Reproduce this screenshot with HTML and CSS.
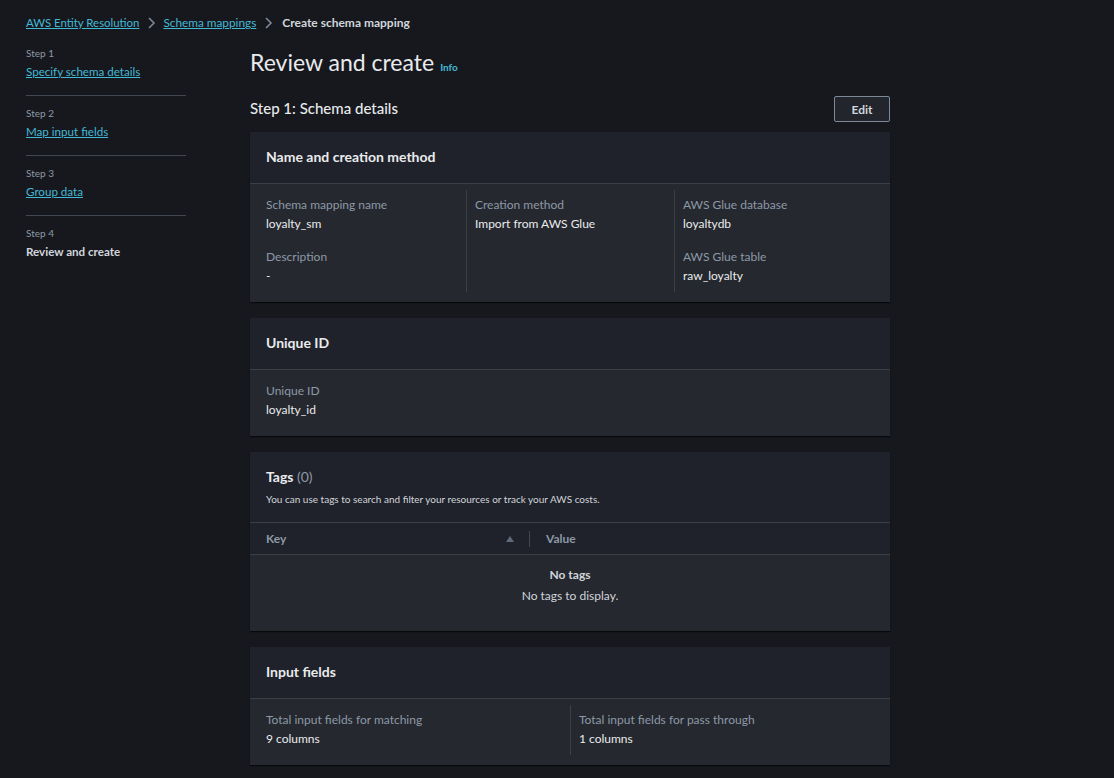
FILE: index.html
```html
<!DOCTYPE html>
<html lang="en">
<head>
<meta charset="utf-8">
<title>Create schema mapping</title>
<link rel="stylesheet" href="styles.css">
</head>
<body>
<div class="page">
  <nav class="breadcrumbs">
    <a href="#" class="crumb-link">AWS Entity Resolution</a>
    <svg class="chev" width="16" height="16" viewBox="0 0 16 16"><path d="M6 3l5 5-5 5" fill="none" stroke="#7d8998" stroke-width="1.6"/></svg>
    <a href="#" class="crumb-link">Schema mappings</a>
    <svg class="chev" width="16" height="16" viewBox="0 0 16 16"><path d="M6 3l5 5-5 5" fill="none" stroke="#7d8998" stroke-width="1.6"/></svg>
    <span class="crumb-current">Create schema mapping</span>
  </nav>
  <div class="layout">
    <aside class="steps">
      <div class="step">
        <div class="step-num">Step 1</div>
        <a href="#" class="step-link">Specify schema details</a>
      </div>
      <div class="step">
        <div class="step-num">Step 2</div>
        <a href="#" class="step-link">Map input fields</a>
      </div>
      <div class="step">
        <div class="step-num">Step 3</div>
        <a href="#" class="step-link">Group data</a>
      </div>
      <div class="step last">
        <div class="step-num">Step 4</div>
        <span class="step-active">Review and create</span>
      </div>
    </aside>
    <main class="main">
      <div class="page-title-row">
        <h1 class="page-title">Review and create</h1>
        <a href="#" class="info">Info</a>
      </div>
      <div class="section-head">
        <h2 class="section-title">Step 1: Schema details</h2>
        <button class="btn">Edit</button>
      </div>

      <section class="container">
        <div class="c-header"><h3 class="c-title">Name and creation method</h3></div>
        <div class="c-body">
          <div class="cols cols-3">
            <div class="col">
              <div class="kv">
                <div class="k">Schema mapping name</div>
                <div class="v">loyalty_sm</div>
              </div>
              <div class="kv">
                <div class="k">Description</div>
                <div class="v">-</div>
              </div>
            </div>
            <div class="col">
              <div class="kv">
                <div class="k">Creation method</div>
                <div class="v">Import from AWS Glue</div>
              </div>
            </div>
            <div class="col">
              <div class="kv">
                <div class="k">AWS Glue database</div>
                <div class="v">loyaltydb</div>
              </div>
              <div class="kv">
                <div class="k">AWS Glue table</div>
                <div class="v">raw_loyalty</div>
              </div>
            </div>
          </div>
        </div>
      </section>

      <section class="container">
        <div class="c-header"><h3 class="c-title">Unique ID</h3></div>
        <div class="c-body">
          <div class="cols cols-1">
            <div class="col">
              <div class="kv">
                <div class="k">Unique ID</div>
                <div class="v">loyalty_id</div>
              </div>
            </div>
          </div>
        </div>
      </section>

      <section class="container">
        <div class="c-header tags-header">
          <h3 class="c-title">Tags <span class="count">(0)</span></h3>
          <p class="c-desc">You can use tags to search and filter your resources or track your AWS costs.</p>
        </div>
        <div class="table">
          <div class="th-row">
            <div class="th th-key">
              <span>Key</span>
              <svg class="sort" width="10" height="8" viewBox="0 0 10 8"><path d="M5 1l4 6H1z" fill="#5f6b7a"/></svg>
            </div>
            <div class="th th-value">Value</div>
          </div>
          <div class="empty">
            <div class="empty-title">No tags</div>
            <div class="empty-text">No tags to display.</div>
          </div>
        </div>
      </section>

      <section class="container">
        <div class="c-header"><h3 class="c-title">Input fields</h3></div>
        <div class="c-body">
          <div class="cols cols-2">
            <div class="col">
              <div class="kv">
                <div class="k">Total input fields for matching</div>
                <div class="v">9 columns</div>
              </div>
            </div>
            <div class="col">
              <div class="kv">
                <div class="k">Total input fields for pass through</div>
                <div class="v">1 columns</div>
              </div>
            </div>
          </div>
        </div>
      </section>
    </main>
  </div>
</div>
</body>
</html>
```

FILE: styles.css
```css
* { box-sizing: border-box; }
html, body { margin: 0; padding: 0; }
body {
  background: #16181d;
  color: #d1d5db;
  font-family: "Lato", "Open Sans", sans-serif;
  font-size: 12px;
  line-height: 16px;
}
a { color: #44b9d6; text-decoration: underline; }
.page { padding: 15px 26px 0 26px; }

.breadcrumbs {
  display: flex;
  align-items: center;
  gap: 4px;
  height: 16px;
  font-size: 11.4px;
}
.chev { display: block; }
.crumb-link + .chev + .crumb-link { font-size: 11.8px; }
.crumb-current { color: #d1d5db; font-weight: 700; font-size: 12px; margin-left: 2px; }

.layout {
  display: flex;
  gap: 64px;
  margin-top: 14px;
}
.steps { width: 160px; flex: none; font-size: 11.6px; }
.step {
  padding: 0 0 15px;
  border-bottom: 1px solid #414750;
  margin-bottom: 9px;
}
.step.last { border-bottom: none; }
.step-num { color: #8d99a8; font-size: 10px; line-height: 16px; margin-bottom: 3px; }
.step-active { font-weight: 700; color: #d1d5db; }

.main { width: 640px; flex: none; }
.page-title-row { display: flex; align-items: baseline; gap: 6px; height: 34px; margin-top: 2px; }
.page-title {
  margin: 0;
  font-size: 23px;
  line-height: 30px;
  font-weight: 400;
  color: #e9ebed;
}
.info { font-size: 10px; font-weight: 700; text-decoration: none; }

.section-head {
  display: flex;
  justify-content: space-between;
  align-items: center;
  margin-top: 15px;
  margin-bottom: 10px;
}
.section-title { margin: 0 0 2px; font-size: 15px; line-height: 20px; font-weight: 500; color: #e9ebed; }
.btn {
  width: 56px;
  height: 26px;
  background: #22252b;
  border: 1px solid #7d8998;
  border-radius: 2px;
  color: #d1d5db;
  font-family: inherit;
  font-weight: 700;
  font-size: 12px;
  padding: 0;
}

.container {
  background: #25282e;
  box-shadow: 0 1px 1px rgba(0,0,0,0.6);
  margin-bottom: 16px;
}
.c-header {
  background: #1f222a;
  padding: 15px 16px 17px;
  border-bottom: 1px solid #3b4047;
}
.c-title {
  margin: 0;
  font-size: 14px;
  line-height: 19px;
  font-weight: 700;
  color: #e9ebed;
}
.tags-header { padding-top: 15px; padding-bottom: 15px; }
.count { font-weight: 400; color: #8d99a8; }
.c-desc { margin: 5px 0 0; font-size: 10px; line-height: 16px; color: #d1d5db; }

.c-body { padding: 6px 16px 10px; }
.cols { display: grid; margin: 0 -8px; }
.cols-3 { grid-template-columns: repeat(3, 1fr); }
.cols-2 { grid-template-columns: repeat(2, 1fr); }
.cols-1 { grid-template-columns: 1fr; }
.col { padding: 7px 8px 8px; display: flex; flex-direction: column; gap: 17px; }
.col + .col { border-left: 1px solid #3b4047; }
.k { color: #8d99a8; margin-bottom: 3px; }
.v { color: #e9ebed; }

.table { background: #25282e; }
.th-row {
  display: flex;
  align-items: center;
  height: 32px;
  background: #1f222a;
  border-bottom: 1px solid #3b4047;
  font-weight: 700;
  color: #8d99a8;
}
.th-key {
  width: 280px;
  padding-left: 16px;
  padding-right: 14px;
  display: flex;
  justify-content: space-between;
  align-items: center;
  border-right: 1px solid #414750;
  height: 16px;
}
.th-value { padding-left: 16px; }
.empty { text-align: center; padding: 12px 0 27px; color: #d1d5db; }
.empty-title { font-weight: 700; margin-bottom: 5px; }
```
